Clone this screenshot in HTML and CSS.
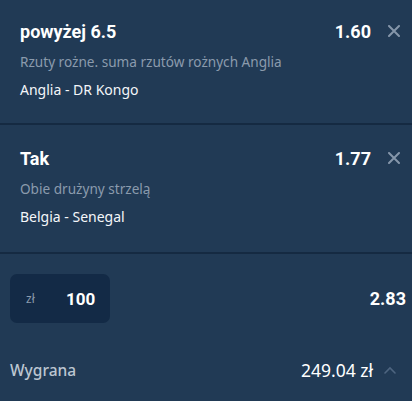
FILE: index.html
```html
<!DOCTYPE html>
<html lang="pl">
<head>
    <meta charset="UTF-8">
    <meta name="viewport" content="width=device-width, initial-scale=1.0">
    <title>Kupon</title>
    <link rel="stylesheet" href="styles.css">
</head>
<body>
    <div class="slip">
        <!-- Zdarzenia na kuponie -->
        <div class="bet">
            <div class="bet-head">
                <span class="bet-pick">powyżej 6.5</span>
                <span class="bet-odds">1.60</span>
                <button class="bet-remove" aria-label="Usuń">
                    <svg width="12" height="12" viewBox="0 0 12 12"><path d="M1 1L11 11M11 1L1 11" stroke="currentColor" stroke-width="2" stroke-linecap="round"/></svg>
                </button>
            </div>
            <div class="bet-market">Rzuty rożne. suma rzutów rożnych Anglia</div>
            <div class="bet-event">Anglia - DR Kongo</div>
        </div>
        <div class="bet">
            <div class="bet-head">
                <span class="bet-pick">Tak</span>
                <span class="bet-odds">1.77</span>
                <button class="bet-remove" aria-label="Usuń">
                    <svg width="12" height="12" viewBox="0 0 12 12"><path d="M1 1L11 11M11 1L1 11" stroke="currentColor" stroke-width="2" stroke-linecap="round"/></svg>
                </button>
            </div>
            <div class="bet-market">Obie drużyny strzelą</div>
            <div class="bet-event">Belgia - Senegal</div>
        </div>

        <!-- Stawka i kurs łączny -->
        <div class="stake-row">
            <div class="stake">
                <span class="stake-currency">zł</span>
                <span class="stake-value">100</span>
            </div>
            <span class="total-odds">2.83</span>
        </div>

        <div class="win-row">
            <span class="win-label">Wygrana</span>
            <span class="win-amount">249.04 zł</span>
            <svg class="win-toggle" width="12" height="8" viewBox="0 0 12 8"><path d="M1 7L6 2L11 7" fill="none" stroke="currentColor" stroke-width="1.6" stroke-linecap="round"/></svg>
        </div>
    </div>
</body>
</html>
```

FILE: styles.css
```css
body {
    margin: 0;
    background-color: #213a55;
    font-family: "Noto Sans", Arial, sans-serif;
    color: #ffffff;
}
.slip {
    width: 412px;
    height: 401px;
    background-color: #213a55;
}
.bet {
    height: 125px;
    padding: 17px 12px 0 20px;
    box-sizing: border-box;
    border-bottom: 2px solid #152a42;
}
.bet + .bet {
    height: 127px;
    margin-top: 2px;
}
.bet-head {
    display: flex;
    align-items: center;
    height: 28px;
}
.bet-pick {
    flex-grow: 1;
    font-family: Roboto, Arial, sans-serif;
    font-weight: bold;
    font-size: 18px;
}
.bet-odds {
    font-family: Roboto, Arial, sans-serif;
    font-weight: bold;
    font-size: 18px;
}
.bet-remove {
    background: none;
    border: none;
    padding: 0;
    margin-left: 17px;
    color: #8596aa;
    display: flex;
    cursor: pointer;
}
.bet-market {
    margin-top: 7px;
    font-size: 13.6px;
    color: #8b9bad;
}
.bet-event {
    margin-top: 9px;
    font-size: 14px;
    color: #f4f6f9;
}
.stake-row {
    display: flex;
    justify-content: space-between;
    align-items: center;
    padding: 20px 6px 0 10px;
}
.stake {
    display: flex;
    align-items: center;
    width: 100px;
    height: 49px;
    box-sizing: border-box;
    padding-left: 16px;
    border-radius: 7px;
    background-color: #132a46;
}
.stake-currency {
    font-size: 12px;
    color: #8b9bad;
    width: 40px;
}
.stake-value {
    font-family: Roboto, Arial, sans-serif;
    font-weight: bold;
    font-size: 17px;
}
.total-odds {
    font-family: Roboto, Arial, sans-serif;
    font-weight: bold;
    font-size: 18px;
}
.win-row {
    display: flex;
    align-items: center;
    padding: 35px 16px 0 10px;
}
.win-label {
    flex-grow: 1;
    font-size: 15.5px;
    font-weight: 500;
    color: #bcc6d1;
}
.win-amount {
    font-size: 17.5px;
}
.win-toggle {
    margin-left: 11px;
    color: #4e6580;
}
```
